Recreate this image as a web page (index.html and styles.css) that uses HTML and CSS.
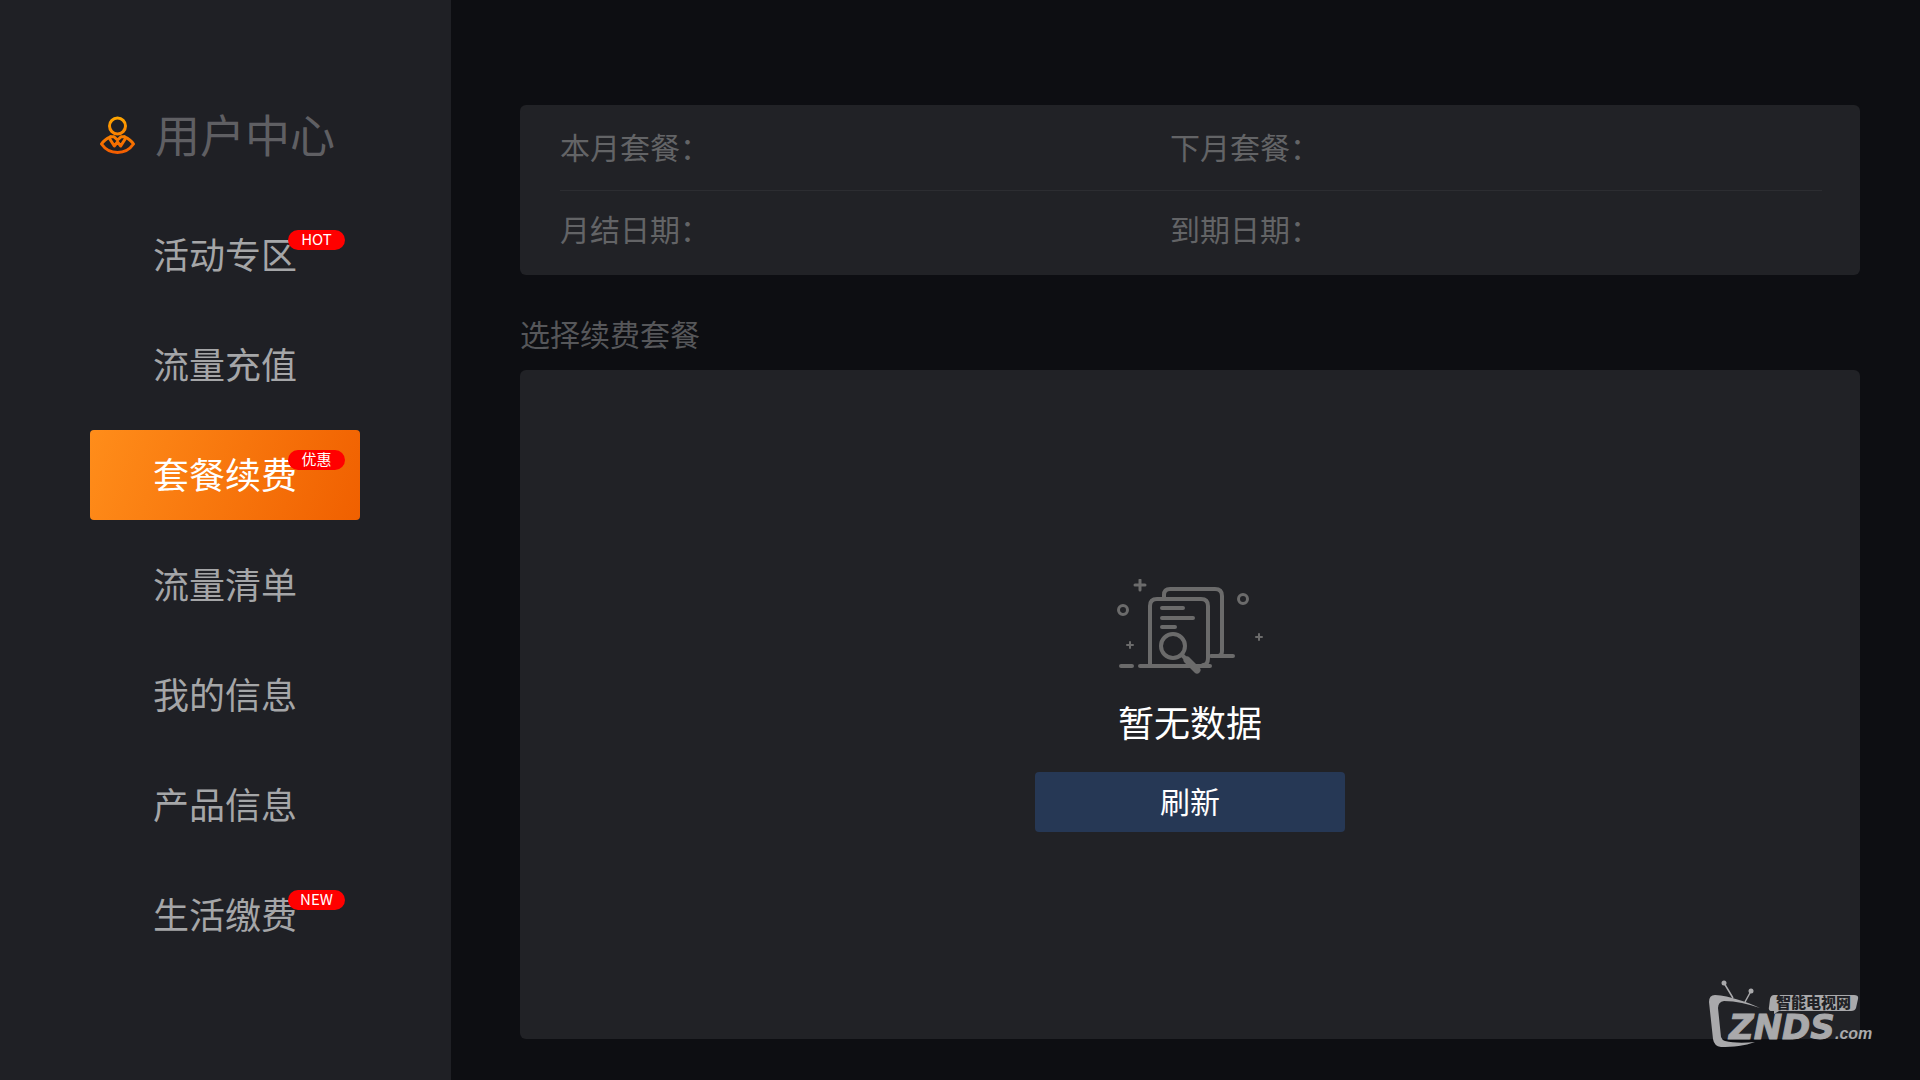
FILE: index.html
```html
<!DOCTYPE html>
<html lang="zh-CN">
<head>
<meta charset="utf-8">
<meta name="viewport" content="width=device-width, initial-scale=1">
<title>用户中心</title>
<link rel="stylesheet" href="styles.css">
</head>
<body>
<div class="app">
  <aside class="sidebar">
    <header class="brand">
      <svg class="brand-icon" viewBox="0 0 36 38" aria-hidden="true">
        <defs>
          <linearGradient id="flame" gradientUnits="userSpaceOnUse" x1="0" y1="0" x2="0" y2="38">
            <stop offset="0" stop-color="#ffa800"/>
            <stop offset="1" stop-color="#f25a00"/>
          </linearGradient>
        </defs>
        <g fill="none" stroke="url(#flame)" stroke-width="3" stroke-linejoin="round" stroke-linecap="round">
          <circle cx="17.5" cy="10" r="8"/>
          <path d="M10.500 20.800C6.500 22.500 3.300 25 1.500 28C5.500 33.800 11 36.500 17.500 36.500S29.500 33.800 33.500 28C31.700 25 28.500 22.500 24.500 20.800"/>
          <path d="M10.500 20.800H14L17.500 24L21 20.800H24.500M9.500 22.500L14.300 30L17.500 26L20.700 30L25.500 22.500"/>
        </g>
      </svg>
      <h1 class="brand-title">用户中心</h1>
    </header>
    <nav class="menu">
      <a class="menu-item" href="#activity"><span>活动专区</span><span class="badge">HOT</span></a>
      <a class="menu-item" href="#recharge"><span>流量充值</span></a>
      <a class="menu-item menu-item-active" href="#renew" aria-current="page"><span>套餐续费</span><span class="badge">优惠</span></a>
      <a class="menu-item" href="#usage"><span>流量清单</span></a>
      <a class="menu-item" href="#profile"><span>我的信息</span></a>
      <a class="menu-item" href="#product"><span>产品信息</span></a>
      <a class="menu-item" href="#bills"><span>生活缴费</span><span class="badge">NEW</span></a>
    </nav>
  </aside>
  <main class="content">
    <section class="card summary">
      <div class="summary-row"><span>本月套餐：</span><span>下月套餐：</span></div>
      <div class="summary-row"><span>月结日期：</span><span>到期日期：</span></div>
    </section>
    <h2 class="section-title">选择续费套餐</h2>
    <section class="card empty">
      <svg class="empty-icon" viewBox="0 0 150 100" aria-hidden="true">
        <g fill="none" stroke="#6b6b6b" stroke-width="4" stroke-linecap="round" stroke-linejoin="round">
          <path d="M35 86V27Q35 20 42 20H86Q93 20 93 27V79Q93 86 88 86M49 18V16Q49 10 55 10H100Q107 10 107 17V72Q107 77 103 77M96 77H118M25 87H95M6 87H17"/>
          <path d="M47 29H68M47 39H78M47 48H60"/>
          <circle cx="58" cy="67" r="12"/>
          <path d="M67 76L72 81"/>
          <path stroke-width="7" d="M72 81L82 91"/>
          <path stroke-width="3" d="M20 6H30M25 1V11"/>
          <path stroke-width="2" d="M12 66H18M15 63V69M141 58H147M144 55V61"/>
          <circle stroke-width="3" cx="8" cy="31" r="4.500"/>
          <circle stroke-width="3" cx="128" cy="20" r="4.500"/>
        </g>
      </svg>
      <p class="empty-text">暂无数据</p>
      <button class="refresh" type="button">刷新</button>
    </section>
  </main>
  <svg class="watermark" viewBox="0 0 200 100" role="img" aria-label="智能电视网 ZNDS.com">
    <g fill="#a9a9ab">
      <circle cx="34" cy="23" r="2.500"/>
      <circle cx="61" cy="31" r="2.500"/>
      <path d="M34 23L43 38M61 31L55 42" stroke="#a9a9ab" stroke-width="1.500"/>
      <path d="M70 48C57 42 40 36 25 35Q19 35 19 42L23 79Q24 86 31 87C43 87 55 86 65 82C54 83 43 83 35 81Q32 80 31 77L28 48Q28 42 34 41C46 41 58 44 70 48Z"/>
      <path d="M84 35H164Q169 35 168 39L166 48Q165 51 161 51H89L84 54L84 51H82Q78 51 79 47L80 39Q81 35 84 35Z"/>
      <text class="mark-name" x="39" y="79">ZNDS</text>
      <text class="mark-domain" x="145" y="79">.com</text>
    </g>
    <text class="mark-cn" x="86" y="48">智能电视网</text>
  </svg>
</div>
</body>
</html>
```
FILE: styles.css
```css
* {
  box-sizing: border-box;
}

body {
  margin: 0;
  background: #0d0e12;
  color: #636466;
  font-family: "Noto Sans CJK SC", sans-serif;
}

.app {
  position: relative;
  display: flex;
  min-height: 100vh;
}

.sidebar {
  flex: 0 0 451px;
  padding: 105px 91px 0 90px;
  background: #1f2025;
}

.brand {
  display: flex;
  align-items: center;
  gap: 19px;
  height: 60px;
  margin-bottom: 45px;
  padding-left: 10px;
}

.brand-icon {
  width: 36px;
  height: 38px;
}

.brand-title {
  margin: 0;
  padding-bottom: 2px;
  color: #5f5f63;
  font-size: 45px;
  font-weight: 400;
  line-height: 60px;
  white-space: nowrap;
}

.menu {
  display: flex;
  flex-direction: column;
  gap: 20px;
}

.menu-item {
  position: relative;
  display: flex;
  align-items: center;
  justify-content: center;
  height: 90px;
  padding-bottom: 4px;
  border-radius: 4px;
  color: #a5a6a8;
  font-size: 36px;
  text-decoration: none;
}

.menu-item-active {
  background: linear-gradient(110deg, #ff8d1a, #f06000);
  color: #fff;
}

.badge {
  position: absolute;
  top: 20px;
  right: 15px;
  width: 57px;
  height: 20px;
  border-radius: 10px;
  background: #f00;
  color: #fff;
  font-size: 15px;
  line-height: 18px;
  text-align: center;
}

.content {
  flex: 1;
  display: flex;
  flex-direction: column;
  padding: 105px 60px 41px 69px;
}

.card {
  border-radius: 6px;
  background: #212226;
}

.summary {
  padding: 3px 38px 3px 40px;
}

.summary-row {
  display: grid;
  grid-template-columns: 610px 1fr;
  align-items: center;
  height: 82px;
  padding-bottom: 6px;
  font-size: 30px;
}

.summary-row + .summary-row {
  padding-bottom: 8px;
  border-top: 1px solid #2c2d31;
}

.section-title {
  margin: 34px 0 13px;
  color: #56575a;
  font-size: 30px;
  font-weight: 400;
  line-height: 48px;
}

.empty {
  flex: 1;
  display: flex;
  flex-direction: column;
  align-items: center;
  justify-content: center;
  padding-top: 2px;
}

.empty-icon {
  width: 150px;
  height: 100px;
}

.empty-text {
  margin: 15px 0 24px;
  color: #fff;
  font-size: 36px;
  line-height: 54px;
}

.refresh {
  width: 310px;
  height: 60px;
  padding: 0 0 4px;
  border: 0;
  border-radius: 4px;
  background: #263855;
  color: #fff;
  font: inherit;
  font-size: 30px;
  line-height: 56px;
}

.watermark {
  position: absolute;
  right: 30px;
  bottom: 20px;
  width: 200px;
  height: 100px;
}

.mark-name {
  stroke: #a9a9ab;
  stroke-width: 1px;
  font: italic 700 34px "DejaVu Sans", sans-serif;
}

.mark-domain {
  font: italic 700 16px "Liberation Sans", sans-serif;
}

.mark-cn {
  fill: #212226;
  font: 900 15px "Noto Sans CJK SC", sans-serif;
}
```
